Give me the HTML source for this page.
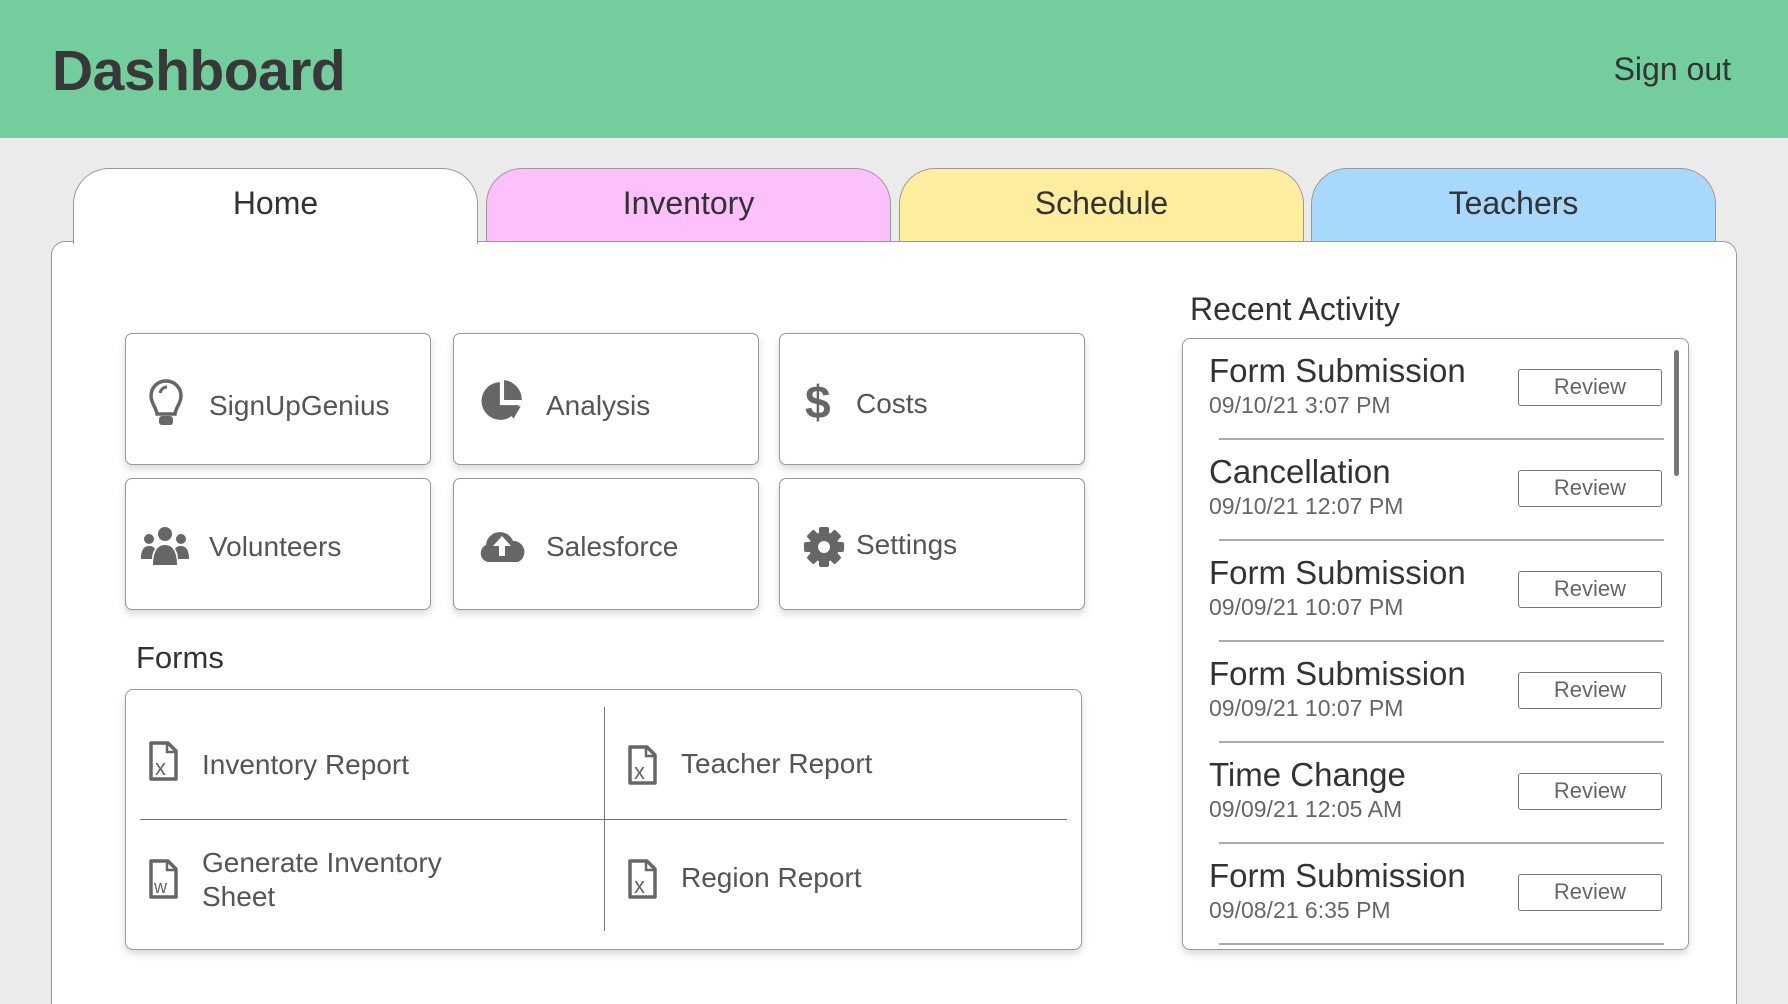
<!DOCTYPE html>
<html><head><meta charset="utf-8"><style>
*{box-sizing:border-box;margin:0;padding:0}
html{width:1788px;height:1004px;overflow:hidden}
body{width:1788px;height:1004px;overflow:hidden;background:#ebebeb;font-family:"Liberation Sans",Arial,sans-serif;position:relative;color:#333}
.hdr{position:absolute;left:0;top:0;width:1788px;height:138px;background:#74cd9c}
.hdr h1{position:absolute;left:52px;top:38px;font-size:57px;font-weight:bold;color:#383838;letter-spacing:-0.5px}
.hdr .so{position:absolute;right:57px;top:51px;font-size:32px;color:#333}
.tab{position:absolute;top:168px;height:74px;width:405px;border:1.5px solid #999;border-bottom:none;border-radius:36px 36px 0 0;text-align:center;font-size:32px;line-height:68px;color:#333}
.panel{position:absolute;left:51px;top:241px;width:1686px;height:763px;background:#fff;border:1.5px solid #999;border-bottom:none;border-radius:14px 14px 0 0}
.tile{position:absolute;width:306px;height:132px;border:1.5px solid #999;border-radius:7px;background:#fff;box-shadow:0 4px 8px rgba(0,0,0,.15);font-size:28px;color:#555}
.tile svg{position:absolute;left:20px;top:46px}
.tile span{position:absolute;left:83px;top:56px}
.lbl{position:absolute;font-size:31px;color:#333}
.forms{position:absolute;left:125px;top:689px;width:957px;height:261px;border:1.5px solid #999;border-radius:8px;background:#fff;box-shadow:0 4px 8px rgba(0,0,0,.15)}
.fi{position:absolute;font-size:28px;color:#555;line-height:34px}
.ra{position:absolute;left:1182px;top:338px;width:507px;height:612px;border:1.5px solid #999;border-radius:8px;background:#fff;box-shadow:0 4px 8px rgba(0,0,0,.15);overflow:hidden}
.row{position:absolute;left:0;width:507px;height:101px}
.row .t{position:absolute;left:26px;top:13px;font-size:33px;color:#333}
.row .d{position:absolute;left:26px;top:53px;font-size:23px;color:#666}
.row .b{position:absolute;left:335px;top:30px;width:144px;height:37px;border:1.5px solid #777;border-radius:3px;font-size:22px;color:#666;text-align:center;line-height:33px}
.row .l{position:absolute;left:36px;right:26px;bottom:0;border-top:2px solid #aaa}
</style></head><body>
<div class="hdr"><h1>Dashboard</h1><div class="so">Sign out</div></div>
<div class="tab" style="left:486px;background:#fcc0fc">Inventory</div>
<div class="tab" style="left:899px;background:#fdee9f">Schedule</div>
<div class="tab" style="left:1311px;background:#a8d8fc">Teachers</div>
<div class="panel"></div>
<div class="tab" style="left:73px;background:#fff;height:76px;z-index:2">Home</div>

<div class="tile" style="left:125px;top:333px"><svg width="40" height="50" viewBox="0 0 40 50" style="top:44px"><path d="M20 3C11 3 5 10 5 18c0 7 5 11 6 18h18c1-7 6-11 6-18C35 10 29 3 20 3z" fill="none" stroke="#666" stroke-width="3.5"/><path d="M14 15c1-4 4-6 7-6" fill="none" stroke="#666" stroke-width="3"/><rect x="13" y="38" width="14" height="9" rx="3" fill="#666"/></svg><span>SignUpGenius</span></div>
<div class="tile" style="left:453px;top:333px"><svg width="46" height="46" viewBox="0 0 44 44" style="left:26px;top:44px"><path d="M19 4A18 18 0 1 0 37 26H19z" fill="#666"/><path d="M23 2v19h17A19 19 0 0 0 23 2z" fill="#666"/><path d="M24 27h15l-7 12z" fill="#666"/></svg><span style="left:92px">Analysis</span></div>
<div class="tile" style="left:779px;top:333px"><svg width="30" height="50" viewBox="0 0 30 50" style="left:24px;top:42px"><text x="1" y="42" font-size="46" font-weight="bold" fill="#666" font-family="Liberation Sans">$</text></svg><span style="left:76px;top:54px">Costs</span></div>
<div class="tile" style="left:125px;top:478px"><svg width="50" height="44" viewBox="0 0 50 44" style="left:14px"><circle cx="25" cy="9" r="7" fill="#666"/><circle cx="9" cy="14" r="5" fill="#666"/><circle cx="41" cy="14" r="5" fill="#666"/><path d="M13 40c0-14 5-20 12-20s12 6 12 20z" fill="#666"/><path d="M1 34c0-9 3-13 8-13 3 0 5 1 6 3-2 3-3 6-3 10z" fill="#666"/><path d="M49 34c0-9-3-13-8-13-3 0-5 1-6 3 2 3 3 6 3 10z" fill="#666"/></svg><span style="top:52px">Volunteers</span></div>
<div class="tile" style="left:453px;top:478px"><svg width="50" height="46" viewBox="0 0 50 44" style="left:24px;top:42px"><path d="M10 40a9 9 0 0 1-2-17 14 14 0 0 1 27-4 11 11 0 0 1 5 21z" fill="#666"/><path d="M24 14l-9 10h6v10h6V24h6z" fill="#fff"/></svg><span style="left:92px;top:52px">Salesforce</span></div>
<div class="tile" style="left:779px;top:478px"><svg width="44" height="44" viewBox="0 0 44 44" style="left:22px"><g fill="#666" transform="translate(22 22)"><rect x="-5" y="-20" width="10" height="40" rx="2"/><rect x="-5" y="-20" width="10" height="40" rx="2" transform="rotate(45)"/><rect x="-5" y="-20" width="10" height="40" rx="2" transform="rotate(90)"/><rect x="-5" y="-20" width="10" height="40" rx="2" transform="rotate(135)"/><circle r="15"/></g><circle cx="22" cy="22" r="6" fill="#fff"/></svg><span style="left:76px;top:50px">Settings</span></div>

<div class="lbl" style="left:136px;top:640px">Forms</div>
<div class="forms">
<div style="position:absolute;left:478px;top:17px;height:224px;border-left:1.5px solid #777"></div>
<div style="position:absolute;left:14px;right:14px;top:129px;border-top:1.5px solid #777"></div>
</div>
<svg style="position:absolute;left:148px;top:740px" width="32" height="42" viewBox="0 0 32 42"><path d="M3 3h17l8 8v28H3z" fill="none" stroke="#666" stroke-width="3.5" stroke-linejoin="round"/><path d="M19 3v9h9" fill="none" stroke="#666" stroke-width="2.5"/><text x="7" y="35" font-size="22" fill="#666" font-family="Liberation Sans">x</text></svg>
<div class="fi" style="left:202px;top:748px">Inventory Report</div>
<svg style="position:absolute;left:627px;top:744px" width="32" height="42" viewBox="0 0 32 42"><path d="M3 3h17l8 8v28H3z" fill="none" stroke="#666" stroke-width="3.5" stroke-linejoin="round"/><path d="M19 3v9h9" fill="none" stroke="#666" stroke-width="2.5"/><text x="7" y="35" font-size="22" fill="#666" font-family="Liberation Sans">x</text></svg>
<div class="fi" style="left:681px;top:747px">Teacher Report</div>
<svg style="position:absolute;left:148px;top:858px" width="32" height="42" viewBox="0 0 32 42"><path d="M3 3h17l8 8v28H3z" fill="none" stroke="#666" stroke-width="3.5" stroke-linejoin="round"/><path d="M19 3v9h9" fill="none" stroke="#666" stroke-width="2.5"/><text x="6" y="35" font-size="18" fill="#666" font-family="Liberation Sans">w</text></svg>
<div class="fi" style="left:202px;top:846px">Generate Inventory<br>Sheet</div>
<svg style="position:absolute;left:627px;top:858px" width="32" height="42" viewBox="0 0 32 42"><path d="M3 3h17l8 8v28H3z" fill="none" stroke="#666" stroke-width="3.5" stroke-linejoin="round"/><path d="M19 3v9h9" fill="none" stroke="#666" stroke-width="2.5"/><text x="7" y="35" font-size="22" fill="#666" font-family="Liberation Sans">x</text></svg>
<div class="fi" style="left:681px;top:861px">Region Report</div>

<div class="lbl" style="left:1190px;top:291px;font-size:32px">Recent Activity</div>
<div class="ra">
<div class="row" style="top:0"><div class="t">Form Submission</div><div class="d">09/10/21 3:07 PM</div><div class="b">Review</div><div class="l"></div></div>
<div class="row" style="top:101px"><div class="t">Cancellation</div><div class="d">09/10/21 12:07 PM</div><div class="b">Review</div><div class="l"></div></div>
<div class="row" style="top:202px"><div class="t">Form Submission</div><div class="d">09/09/21 10:07 PM</div><div class="b">Review</div><div class="l"></div></div>
<div class="row" style="top:303px"><div class="t">Form Submission</div><div class="d">09/09/21 10:07 PM</div><div class="b">Review</div><div class="l"></div></div>
<div class="row" style="top:404px"><div class="t">Time Change</div><div class="d">09/09/21 12:05 AM</div><div class="b">Review</div><div class="l"></div></div>
<div class="row" style="top:505px"><div class="t">Form Submission</div><div class="d">09/08/21 6:35 PM</div><div class="b">Review</div><div class="l"></div></div>
<div style="position:absolute;left:491px;top:11px;width:5px;height:126px;background:#777;border-radius:3px"></div>
</div>
</body></html>
